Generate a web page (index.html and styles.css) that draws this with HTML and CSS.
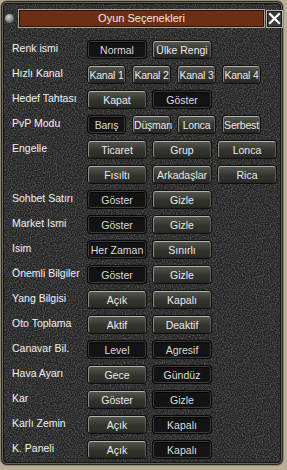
FILE: index.html
```html
<!DOCTYPE html>
<html lang="tr">
<head>
    <meta charset="UTF-8">
    <meta name="viewport" content="width=device-width, initial-scale=1.0">
    <title>Oyun Seçenekleri</title>
    <link rel="stylesheet" href="styles.css">
</head>
<body>
    <div class="window">
        <!-- Title Bar -->
        <div class="titlebar">
            <span class="knob"></span>
            <div class="title">Oyun Seçenekleri</div>
            <span class="close">
                <svg width="13" height="13" viewBox="0 0 13 13">
                    <path d="M2 2 L11 11 M11 2 L2 11" stroke="#fff" stroke-width="2.2" stroke-linecap="square"/>
                </svg>
            </span>
        </div>

        <!-- Option Rows -->
        <div class="rows">
            <div class="row">
                <span class="label">Renk ismi</span>
                <div class="group">
                    <span class="btn off">Normal</span>
                    <span class="btn">Ülke Rengi</span>
                </div>
            </div>
            <div class="row">
                <span class="label">Hızlı Kanal</span>
                <div class="group four">
                    <span class="btn">Kanal 1</span>
                    <span class="btn">Kanal 2</span>
                    <span class="btn">Kanal 3</span>
                    <span class="btn">Kanal 4</span>
                </div>
            </div>
            <div class="row">
                <span class="label">Hedef Tahtası</span>
                <div class="group">
                    <span class="btn">Kapat</span>
                    <span class="btn off">Göster</span>
                </div>
            </div>
            <div class="row">
                <span class="label">PvP Modu</span>
                <div class="group four">
                    <span class="btn off">Barış</span>
                    <span class="btn">Düşman</span>
                    <span class="btn">Lonca</span>
                    <span class="btn">Serbest</span>
                </div>
            </div>
            <div class="row">
                <span class="label">Engelle</span>
                <div class="group three">
                    <span class="btn">Ticaret</span>
                    <span class="btn">Grup</span>
                    <span class="btn">Lonca</span>
                    <span class="btn">Fısıltı</span>
                    <span class="btn">Arkadaşlar</span>
                    <span class="btn">Rica</span>
                </div>
            </div>
            <div class="row">
                <span class="label">Sohbet Satırı</span>
                <div class="group">
                    <span class="btn off">Göster</span>
                    <span class="btn">Gizle</span>
                </div>
            </div>
            <div class="row">
                <span class="label">Market Ismi</span>
                <div class="group">
                    <span class="btn off">Göster</span>
                    <span class="btn">Gizle</span>
                </div>
            </div>
            <div class="row">
                <span class="label">Isim</span>
                <div class="group">
                    <span class="btn off">Her Zaman</span>
                    <span class="btn">Sınırlı</span>
                </div>
            </div>
            <div class="row">
                <span class="label">Önemli Bilgiler</span>
                <div class="group">
                    <span class="btn off">Göster</span>
                    <span class="btn">Gizle</span>
                </div>
            </div>
            <div class="row">
                <span class="label">Yang Bilgisi</span>
                <div class="group">
                    <span class="btn">Açık</span>
                    <span class="btn">Kapalı</span>
                </div>
            </div>
            <div class="row">
                <span class="label">Oto Toplama</span>
                <div class="group">
                    <span class="btn">Aktif</span>
                    <span class="btn">Deaktif</span>
                </div>
            </div>
            <div class="row">
                <span class="label">Canavar Bil.</span>
                <div class="group">
                    <span class="btn off">Level</span>
                    <span class="btn off">Agresif</span>
                </div>
            </div>
            <div class="row">
                <span class="label">Hava Ayarı</span>
                <div class="group">
                    <span class="btn">Gece</span>
                    <span class="btn off">Gündüz</span>
                </div>
            </div>
            <div class="row">
                <span class="label">Kar</span>
                <div class="group">
                    <span class="btn">Göster</span>
                    <span class="btn off">Gizle</span>
                </div>
            </div>
            <div class="row">
                <span class="label">Karlı Zemin</span>
                <div class="group">
                    <span class="btn">Açık</span>
                    <span class="btn off">Kapalı</span>
                </div>
            </div>
            <div class="row">
                <span class="label">K. Paneli</span>
                <div class="group">
                    <span class="btn">Açık</span>
                    <span class="btn off">Kapalı</span>
                </div>
            </div>
        </div>
    </div>
</body>
</html>
```

FILE: styles.css
```css
* {
    margin: 0;
    padding: 0;
    box-sizing: border-box;
}
body {
    font-family: "Liberation Sans", Arial, sans-serif;
    font-size: 10px;
    color: #ececec;
    background-color: #b9af97;
    width: 287px;
    height: 470px;
    overflow: hidden;
}
/* Window frame with granite texture */
.window {
    width: 284px;
    height: 466px;
    border: 1px solid #8e887c;
    border-radius: 7px;
    box-shadow: inset 0 0 0 1px #2a2620, inset 0 0 0 2px #6a6458, inset 0 0 0 3px #151515;
    background-color: #232323;
    background-image: url("data:image/svg+xml,%3Csvg xmlns='http://www.w3.org/2000/svg' width='160' height='160'%3E%3Cfilter id='n'%3E%3CfeTurbulence type='fractalNoise' baseFrequency='0.85' numOctaves='2' stitchTiles='stitch'/%3E%3CfeColorMatrix values='0 0 0 0 1 0 0 0 0 1 0 0 0 0 1 0 0 0 0.5 -0.18'/%3E%3C/filter%3E%3Crect width='160' height='160' filter='url(%23n)'/%3E%3C/svg%3E");
    padding: 8px 0 0 11px;
}
/* Title Bar */
.titlebar {
    display: flex;
    align-items: center;
    height: 19px;
    margin-left: -7px;
}
.knob {
    width: 9px;
    height: 9px;
    border-radius: 50%;
    background: radial-gradient(circle at 40% 35%, #d8d8d0, #7a7a72 60%, #3a3a36);
    margin-right: 4px;
    flex-shrink: 0;
}
.title {
    flex: 1;
    height: 19px;
    line-height: 17px;
    font-size: 11px;
    text-align: center;
    color: #f0e8e0;
    border: 1px solid #a8a49a;
    box-shadow: inset 0 0 0 1px #2a140a;
    background-color: #6c2a10;
    background-image: url("data:image/svg+xml,%3Csvg xmlns='http://www.w3.org/2000/svg' width='120' height='40'%3E%3Cfilter id='n'%3E%3CfeTurbulence type='fractalNoise' baseFrequency='0.9' numOctaves='2' stitchTiles='stitch'/%3E%3CfeColorMatrix values='0 0 0 0 0.15 0 0 0 0 0.05 0 0 0 0 0.02 0 0 0 0.9 -0.25'/%3E%3C/filter%3E%3Crect width='120' height='40' filter='url(%23n)'/%3E%3C/svg%3E");
}
.close {
    width: 17px;
    height: 18px;
    margin-left: 1px;
    display: flex;
    align-items: center;
    justify-content: center;
    border: 1px solid #b8b4aa;
    box-shadow: inset 0 0 0 1px #1a1a1a;
    background: #3a3a38;
    flex-shrink: 0;
}
/* Option rows */
.rows {
    margin-top: 13px;
}
.row {
    display: flex;
    align-items: flex-start;
    min-height: 25px;
}
.label {
    width: 76px;
    height: 17px;
    line-height: 14px;
    font-size: 10.5px;
    color: #f2f2f2;
    white-space: nowrap;
    flex-shrink: 0;
}
.group {
    display: flex;
    flex-wrap: wrap;
    column-gap: 7px;
    row-gap: 8px;
    padding-bottom: 8px;
}
.group.three {
    width: 190px;
}
.group.four {
    column-gap: 8px;
}
/* Buttons */
.btn {
    width: 58px;
    height: 17px;
    line-height: 16px;
    font-size: 10.5px;
    text-align: center;
    white-space: nowrap;
    color: #ececec;
    border: 1px solid;
    border-color: #b4b4aa #5e5e58 #262624 #8a8a82;
    border-radius: 3px;
    background: linear-gradient(#55554f, #34342f 55%, #2a2a27);
    box-shadow: 0 0 0 1px #101010;
}
.four .btn {
    width: 37px;
    letter-spacing: -0.2px;
}
.btn.off {
    background: #131313;
    border-color: #3c3c3a;
    box-shadow: 0 0 0 1px #080808, inset 0 1px 0 #050505;
    color: #dcdcdc;
}
```
